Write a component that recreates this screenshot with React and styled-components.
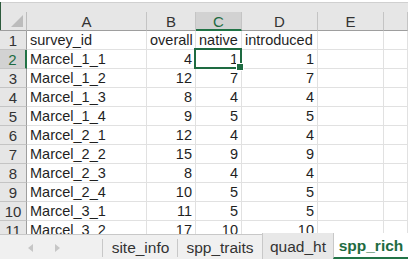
import React from 'react';
import styled, {createGlobalStyle, css} from 'styled-components';

const Global = createGlobalStyle`
    html, body {
        margin: 0;
        padding: 0;
        background: #ffffff;
        overflow: hidden;
    }
    * {
        box-sizing: border-box;
    }
`;

const Frame = styled.div`
    width: 408px;
    height: 259px;
    display: flex;
    flex-direction: column;
    overflow: hidden;
    font-family: "Liberation Sans", Arial, sans-serif;
    color: #1f1f1f;
    background: #ffffff;
`;

const TopStrip = styled.div`
    height: 12px;
    flex: none;
    background: #e6e6e6;
    border-top: 2px solid #ffffff;
    box-shadow: inset 1px 0 0 #2d5a3c, inset 0 1px 0 #d0d0d0;
`;

const Sheet = styled.div`
    flex: 1;
    overflow: hidden;
    display: grid;
    grid-template-columns: 27px 120px 49px 46px 76px 66px 1fr;
    grid-auto-rows: 19px;
    align-content: start;
`;

const Corner = styled.div`
    background: #e6e6e6;
    border-right: 1px solid #bdbdbd;
    border-bottom: 1px solid #9e9e9e;
    box-shadow: inset 1px 0 0 #2d5a3c;
    position: relative;
    &::after {
        content: '';
        position: absolute;
        right: 3px;
        bottom: 3px;
        width: 0;
        height: 0;
        border-left: 12px solid transparent;
        border-bottom: 12px solid #bcbcbc;
    }
`;

const ColHead = styled.div`
    background: ${p => p.active ? '#d2d2d2' : '#e6e6e6'};
    color: ${p => p.active ? '#1e6b41' : '#333333'};
    border-right: 1px solid #c4c4c4;
    border-bottom: ${p => p.active ? '2px solid #217346' : '1px solid #9e9e9e'};
    font-size: 15px;
    display: flex;
    align-items: center;
    justify-content: center;
    padding-top: 1px;
`;

const RowHead = styled.div`
    background: ${p => p.active ? '#d2d2d2' : '#e6e6e6'};
    color: ${p => p.active ? '#1e6b41' : '#333333'};
    border-right: ${p => p.active ? '2px solid #217346' : '1px solid #9e9e9e'};
    border-bottom: 1px solid #c4c4c4;
    font-size: 15px;
    display: flex;
    align-items: center;
    justify-content: center;
`;

const Cell = styled.div`
    position: relative;
    border-right: 1px solid #e1e1e1;
    border-bottom: 1px solid #e1e1e1;
    font-size: 14.5px;
    line-height: 18px;
    padding: 0 3px;
    white-space: nowrap;
    overflow: ${p => p.selected ? 'visible' : 'hidden'};
    text-align: ${p => p.num ? 'right' : 'left'};
    z-index: ${p => p.selected ? 3 : 0};
`;

const Selection = styled.div`
    position: absolute;
    left: -2px;
    top: -2px;
    right: -1px;
    bottom: -1px;
    border: 2px solid #1e6b41;
    &::after {
        content: '';
        position: absolute;
        right: -4px;
        bottom: -4px;
        width: 6px;
        height: 6px;
        background: #1e6b41;
        border: 1px solid #ffffff;
    }
`;

const TabBar = styled.div`
    height: 25px;
    flex: none;
    display: flex;
    align-items: stretch;
    background: #f0f0f0;
    border-top: 1px solid #c8c8c8;
`;

const Nav = styled.div`
    width: 103px;
    display: flex;
    align-items: center;
    padding-left: 28px;
    gap: 22px;
    border-right: 1px solid #c8c8c8;
    margin: 4px 0 2px;
`;

const Arrow = styled.span`
    width: 0;
    height: 0;
    border-top: 4px solid transparent;
    border-bottom: 4px solid transparent;
    ${p => p.dir === 'left' ? css`
        border-right: 5px solid #c6c6c6;
    ` : css`
        border-left: 5px solid #c6c6c6;
    `}
`;

const Tab = styled.div`
    width: ${p => p.w}px;
    display: flex;
    align-items: center;
    justify-content: center;
    font-size: 15.5px;
    color: #333333;
    position: relative;
    padding-top: 1px;
    ${p => p.sep && css`
        &::after {
            content: '';
            position: absolute;
            right: 0;
            top: 4px;
            bottom: 2px;
            width: 1px;
            background: #c8c8c8;
        }
    `}
    ${p => p.boxed && css`
        background: #e8e8e8;
        border-left: 1px solid #c8c8c8;
        margin-top: -2px;
    `}
    ${p => p.active && css`
        flex: 1;
        background: #ffffff;
        color: #1e6b41;
        font-weight: bold;
        border-left: 1px solid #c8c8c8;
        border-bottom: 2px solid #217346;
        margin-top: -2px;
    `}
`;

const cols = ['A', 'B', 'C', 'D', 'E', ''];

const rows = [
    ['survey_id', 'overall', 'native', 'introduced'],
    ['Marcel_1_1', 4, 1, 1],
    ['Marcel_1_2', 12, 7, 7],
    ['Marcel_1_3', 8, 4, 4],
    ['Marcel_1_4', 9, 5, 5],
    ['Marcel_2_1', 12, 4, 4],
    ['Marcel_2_2', 15, 9, 9],
    ['Marcel_2_3', 8, 4, 4],
    ['Marcel_2_4', 10, 5, 5],
    ['Marcel_3_1', 11, 5, 5],
    ['Marcel_3_2', 17, 10, 10],
];

function App(){
    return (
        <Frame>
            <Global />
            <TopStrip />
            <Sheet>
                <Corner />
                {cols.map((c, i) => (
                    <ColHead key={i} active={c === 'C'}>{c}</ColHead>
                ))}
                {rows.map((r, ri) => (
                    <React.Fragment key={ri}>
                        <RowHead active={ri === 1}>{ri + 1}</RowHead>
                        {r.map((v, ci) => {
                            const selected = ri === 1 && ci === 2;
                            return (
                                <Cell key={ci} num={typeof v === 'number'} selected={selected}>
                                    {v}
                                    {selected && <Selection />}
                                </Cell>
                            );
                        })}
                        <Cell />
                        <Cell />
                    </React.Fragment>
                ))}
            </Sheet>
            <TabBar>
                <Nav>
                    <Arrow dir="left" />
                    <Arrow dir="right" />
                </Nav>
                <Tab w={75} sep>site_info</Tab>
                <Tab w={84}>spp_traits</Tab>
                <Tab w={71} boxed>quad_ht</Tab>
                <Tab active>spp_rich</Tab>
            </TabBar>
        </Frame>
    );
}

export default App;
